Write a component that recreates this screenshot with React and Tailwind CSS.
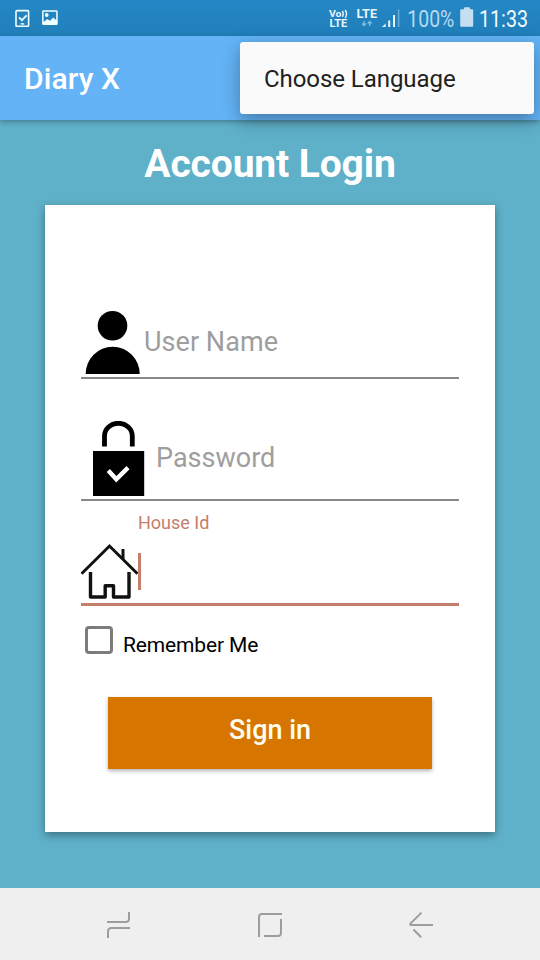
function StatusBar() {
  return (
    <div className="flex h-9 w-full bg-gradient-to-b from-[#2487c5] to-[#207fba] text-white">
      <svg width="180" height="36" viewBox="0 0 180 36" fill="none" stroke="#f2ffff">
        <rect x="16" y="10.6" width="12.6" height="15.6" rx="0.8" strokeWidth="1.6" />
        <path d="M19 17.4l3 2.8 4.6-4.8" strokeWidth="1.8" />
        <path d="M20.6 23.9h3.6" strokeWidth="1.4" />
        <path
          d="M43.5 10.3h12.8a1.4 1.4 0 0 1 1.4 1.4v12a1.4 1.4 0 0 1-1.4 1.4H43.5a1.4 1.4 0 0 1-1.4-1.4v-12a1.4 1.4 0 0 1 1.4-1.4zM43.6 11.8v10.2l3.6-3 2.8 1.8 3.2-3.4 3 2.6v-8.2z"
          fill="#f2ffff"
          fillRule="evenodd"
          stroke="none"
        />
        <circle cx="46.7" cy="15" r="1.9" fill="#f2ffff" stroke="none" />
      </svg>
      <svg className="ml-auto" width="220" height="36" viewBox="320 0 220 36" fill="#e6f6fc" fontFamily="Roboto, sans-serif">
        <text x="329" y="17" fontSize="9.5" fontWeight="700" textLength="12.5" lengthAdjust="spacingAndGlyphs">Vo</text>
        <path d="M342.4 10.8q1.7 3 0 6M345.2 10q2.6 4 0 8" fill="none" stroke="#e6f6fc" strokeWidth="1.4" />
        <text x="329.5" y="27.3" fontSize="10" fontWeight="700" textLength="17.8" lengthAdjust="spacingAndGlyphs">LTE</text>
        <text x="356.6" y="17.7" fontSize="12" fontWeight="700" textLength="20.5" lengthAdjust="spacingAndGlyphs">LTE</text>
        <path d="M364 21v4.5M362 23.4l2 2.1 2-2.1M369.7 26v-4.5M367.7 23.6l2-2.1 2 2.1" fill="none" stroke="#7dbde0" strokeWidth="1.4" />
        <path d="M382 27l3.6-3.4V27z" />
        <path d="M388.2 20.5h2V27h-2zM393 15h2v12h-2z" />
        <path d="M397.8 9.5h1.6V27h-1.6z" fill="#63abd5" />
        <text x="407.3" y="27" fontSize="23" fill="#b5daee" textLength="47" lengthAdjust="spacingAndGlyphs">100%</text>
        <path d="M461.2 9.3h2.8V8q0-.8.8-.8h4.4q.8 0 .8.8v1.3h2.2q1 0 1 1v15.5q0 1-1 1h-11q-1 0-1-1V10.3q0-1 1-1z" fill="#c4e0f0" />
        <text x="479" y="27" fontSize="23" fill="#f0faff" textLength="49" lengthAdjust="spacingAndGlyphs">11:33</text>
      </svg>
    </div>
  );
}

function PersonIcon() {
  return (
    <svg width="63" height="63" viewBox="81 311 63 63">
      <circle cx="112.5" cy="325.8" r="14.8" />
      <path d="M85.7 374a27 27.3 0 0 1 54 0z" />
    </svg>
  );
}

function LockIcon() {
  return (
    <svg width="75" height="75" viewBox="81 421 75 75">
      <path d="M104.5 446.500v-10.300a13.900 12.900 0 0 1 27.800 0v10.300" fill="none" stroke="#000" strokeWidth="4.800" />
      <path d="M93 451h51.200V496H93z" />
      <path d="M108.300 470.600l8 8.700 11.700-11.700" fill="none" stroke="#fff" strokeWidth="4.400" />
    </svg>
  );
}

function HouseIcon() {
  return (
    <svg width="57" height="57" viewBox="81 543 57 57" fill="none" stroke="#111">
      <path d="M81.500 573.800L109.500 546l28 27.800" strokeWidth="3" />
      <path d="M123 549v10" strokeWidth="3" />
      <path d="M90.500 572v25h14.700v-11.200h8.300v11.200h15.500v-25" strokeWidth="3.400" strokeLinejoin="round" />
    </svg>
  );
}

function NavBar() {
  return (
    <div className="h-[72px] bg-[#efefef]">
      <svg width="540" height="72" viewBox="0 888 540 72" fill="none" stroke="#9d9d9d" strokeWidth="2">
        <path d="M107 922h18.500q3.500 0 3.500-3.500V912M130 928h-18.500q-3.500 0-3.500 3.500V938" />
        <path d="M282 914h-20q-3 0-3 3v20M281 919v14q0 3-3 3h-14" />
        <path d="M433 925h-22q-1.400-.2-.4-1.600L421.500 912.600M413.500 929.500l7.700 7.800" />
      </svg>
    </div>
  );
}

export default function App() {
  return (
    <div className="relative flex h-[960px] w-[540px] flex-col overflow-hidden bg-[#5fb0c9] font-['Roboto',sans-serif]">
      <StatusBar />
      <header className="flex h-[84px] items-center bg-[#63b3f6] pl-6 pt-px shadow-[0_2px_5px_rgba(0,0,0,0.28)]">
        <h1 className="text-[30px] font-medium tracking-[0.1px] text-white">Diary X</h1>
      </header>

      <main className="flex flex-1 flex-col items-center">
        <h2 className="mt-[19px] h-[66px] text-[39px] leading-[50px] font-bold tracking-[-0.13px] whitespace-nowrap text-white">Account Login</h2>
        <form className="flex h-[627px] w-[450px] flex-col bg-white px-9 pt-[106px] shadow-[0_3px_8px_rgba(0,0,0,0.36)]">
          <div className="flex h-[68px] border-b-2 border-[#888888]">
            <PersonIcon />
            <span className="mt-px h-[60px] text-[27px] leading-[60px] tracking-[0.05px] text-[#9e9e9e]">User Name</span>
          </div>
          <div className="mt-[42px] flex h-[80px] border-b-2 border-[#888888]">
            <LockIcon />
            <span className="text-[27px] leading-[74px] text-[#9e9e9e]">Password</span>
          </div>
          <label className="mt-[10px] ml-[57px] h-6 text-[18px] leading-6 text-[#c47e6b]">House Id</label>
          <div className="mt-[8px] flex h-[63px] border-b-[3px] border-[#c47e6b]">
            <HouseIcon />
            <div className="mt-[10px] h-[37px] w-[3px] bg-[#c47e6b]" />
          </div>
          <div className="mt-5 ml-1 flex">
            <div className="h-7 w-7 rounded-[4px] border-[3px] border-[#7c7c7c]" />
            <span className="mt-[5px] ml-[10px] text-[21px] leading-[28px] tracking-[-0.15px] whitespace-nowrap text-black">Remember Me</span>
          </div>
          <button
            type="button"
            className="mx-[27px] mt-[38px] h-[72px] bg-[#d67600] pb-[6px] text-[27px] font-medium text-[#fffdf0] shadow-[0_2px_4px_rgba(0,0,0,0.3)]"
          >
            Sign in
          </button>
        </form>
      </main>

      <NavBar />

      <div className="absolute top-[42px] left-[240px] flex h-[72px] w-[294px] items-center rounded-[3px] bg-[#fafafa] pt-px pl-6 text-[24px] tracking-[-0.06px] text-[#212121] shadow-[0_6px_18px_rgba(0,0,0,0.32)]">
        Choose Language
      </div>
    </div>
  );
}
